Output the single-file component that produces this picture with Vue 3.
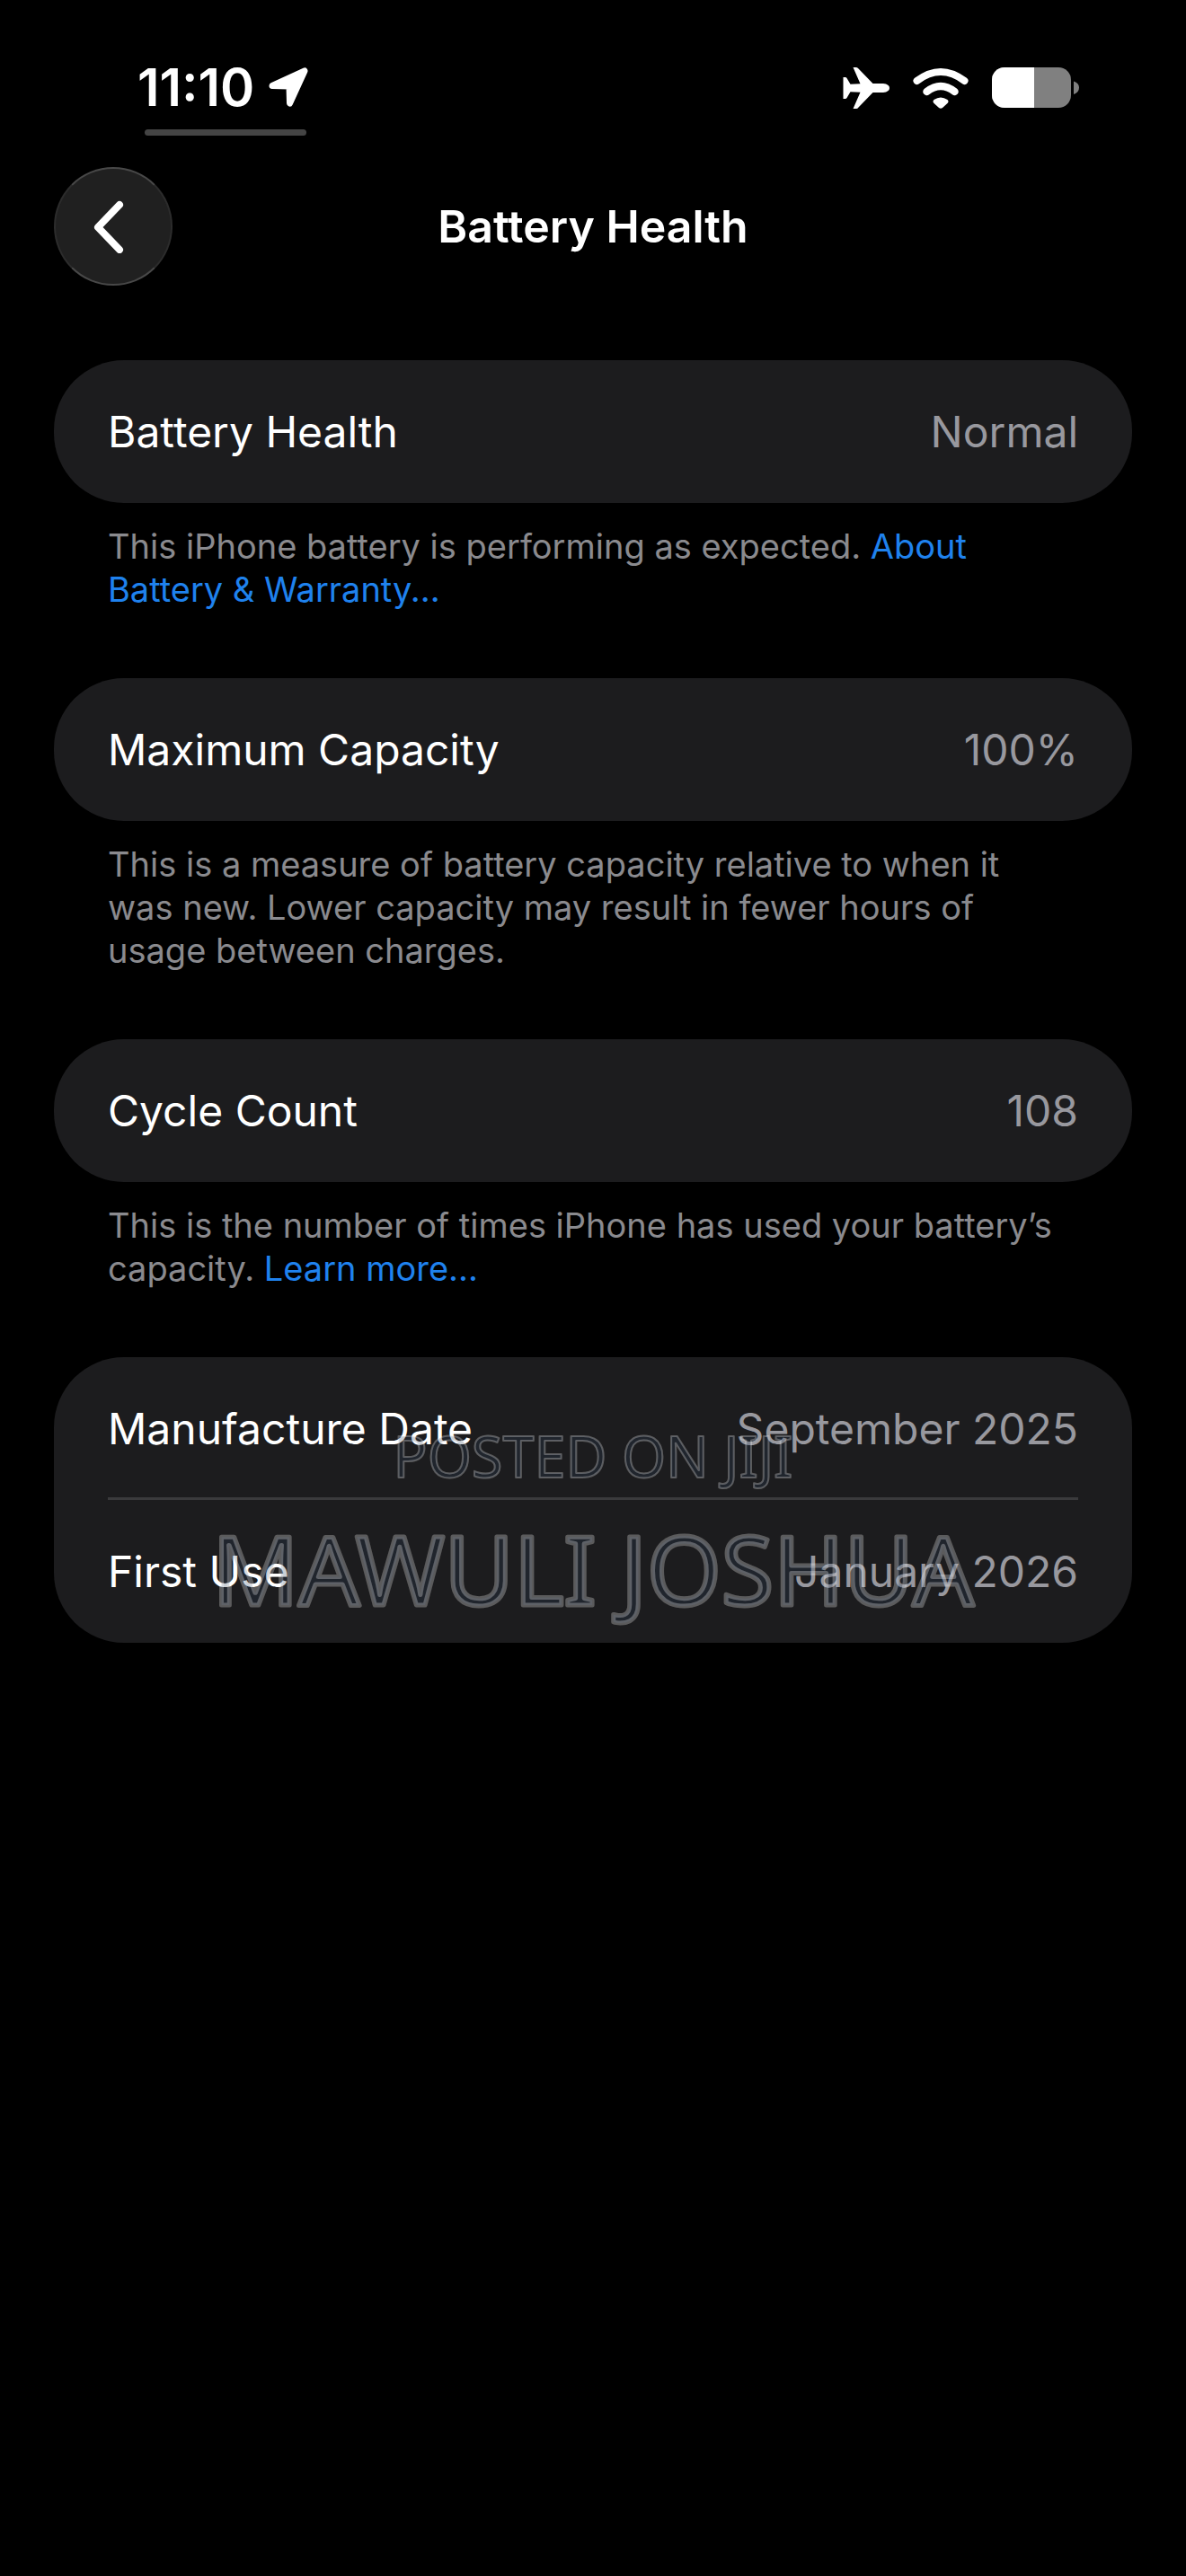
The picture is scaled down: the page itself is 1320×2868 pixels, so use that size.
<script setup>
const groups = [
  {
    rows: [{ label: 'Battery Health', value: 'Normal' }],
    note: 'This iPhone battery is performing as expected.',
    link: 'About Battery & Warranty...',
  },
  {
    rows: [{ label: 'Maximum Capacity', value: '100%' }],
    note: 'This is a measure of battery capacity relative to when it was new. Lower capacity may result in fewer hours of usage between charges.',
  },
  {
    rows: [{ label: 'Cycle Count', value: '108' }],
    note: 'This is the number of times iPhone has used your battery’s capacity.',
    link: 'Learn more...',
  },
  {
    rows: [
      { label: 'Manufacture Date', value: 'September 2025' },
      { label: 'First Use', value: 'January 2026' },
    ],
    watermark: true,
  },
]
</script>

<template>
  <div class="screen">
    <div class="status">
      <div class="status-left">
        <div class="clock">
          <span>11:10</span>
          <svg width="44" height="44" viewBox="0 0 44 44" aria-hidden="true">
            <path d="M4 20.500 L40 4 L23.500 40 L23 21 Z" fill="#fff" stroke="#fff" stroke-width="7" stroke-linejoin="round" />
          </svg>
        </div>
        <div class="pill"></div>
      </div>
      <div class="status-icons">
        <svg width="52" height="46" viewBox="0 0 52 46" aria-hidden="true">
          <path d="M11.500 0 H15 Q16.500 0 17.500 1.500 L33.500 18 H45 Q52 18.800 52 23 Q52 27.200 45 28 H33.500 L17.500 44.500 Q16.500 46 15 46 H11.500 L19.500 27.800 L8.500 27.200 L4.500 34 Q4 35 2.800 35 H0.500 V11 H2.800 Q4 11 4.500 12 L8.500 18.800 L19.500 18.200 Z" fill="#fff" />
        </svg>
        <svg width="62" height="46" viewBox="0 0 62 46" aria-hidden="true">
          <path d="M4.500 15 Q31 -5 57.500 15" fill="none" stroke="#fff" stroke-width="8" stroke-linecap="round" />
          <path d="M15.500 27 Q31 15 46.500 27" fill="none" stroke="#fff" stroke-width="8.500" stroke-linecap="round" />
          <path d="M23.500 36 Q31 31 38.500 36 Q40.500 38 38.500 40 L33 45 Q31 46.500 29 45 L23.500 40 Q21.500 38 23.500 36 Z" fill="#fff" />
        </svg>
        <svg width="97" height="46" viewBox="0 0 97 46" aria-hidden="true">
          <rect x="0" y="0" width="88" height="45" rx="14" fill="#808080" />
          <path d="M14 0 H47 V45 H14 A14 14 0 0 1 0 31 V14 A14 14 0 0 1 14 0 Z" fill="#fff" />
          <path d="M91 15.500 Q97 17.500 97 22.500 Q97 28 91 30 Z" fill="#808080" />
        </svg>
      </div>
    </div>

    <header class="nav">
      <button class="back" type="button" aria-label="Back">
        <svg width="38" height="60" viewBox="0 0 38 60" aria-hidden="true">
          <path d="M30 6 L6 31 L30 56" fill="none" stroke="#fff" stroke-width="8" stroke-linecap="round" stroke-linejoin="round" />
        </svg>
      </button>
      <h1>Battery Health</h1>
    </header>

    <main>
      <section v-for="(group, i) in groups" :key="i">
        <div class="card">
          <dl v-for="row in group.rows" :key="row.label" class="row">
            <dt>{{ row.label }}</dt>
            <dd>{{ row.value }}</dd>
          </dl>
          <svg v-if="group.watermark" class="watermark" width="100%" height="100%">
            <text class="small" x="50%" y="134">POSTED ON JIJI</text>
            <text class="large" x="50%" y="276">MAWULI JOSHUA</text>
          </svg>
        </div>
        <p v-if="group.note" class="note">
          {{ group.note }}
          <a v-if="group.link" href="#">{{ group.link }}</a>
        </p>
      </section>
    </main>
  </div>
</template>

<style>
html,
body {
  background: #000;
}
</style>

<style scoped>
.screen {
  min-height: 100vh;
  background: #000;
  color: #fff;
  font-family: Inter, "Liberation Sans", sans-serif;
}

svg {
  display: block;
}

.status {
  display: flex;
  justify-content: space-between;
  align-items: flex-start;
  padding: 75px 119px 0 153px;
}

.clock {
  display: flex;
  align-items: center;
  gap: 16px;
  font-size: 58px;
  font-weight: 600;
  line-height: 44px;
}

.pill {
  width: 180px;
  height: 7px;
  margin: 25px 0 0 8px;
  border-radius: 4px;
  background: #444;
}

.status-icons {
  display: flex;
  gap: 26px;
}

.nav {
  display: grid;
  grid-template-columns: 132px 1fr 132px;
  align-items: center;
  padding: 35px 60px 83px;
}

.back {
  display: flex;
  align-items: center;
  justify-content: center;
  width: 132px;
  height: 132px;
  padding: 0 8px 0 0;
  border: 2px solid #2c2c2c;
  border-top-color: #484848;
  border-bottom-color: #484848;
  border-radius: 50%;
  background: #202020;
}

h1 {
  margin: 0;
  font-size: 50px;
  font-weight: 600;
  line-height: 62px;
  text-align: center;
}

main {
  padding: 0 60px;
}

.card {
  position: relative;
  border-radius: 78px;
  background: #1c1c1e;
}

.row {
  display: flex;
  align-items: center;
  justify-content: space-between;
  height: 159px;
  margin: 0 60px;
  font-size: 48px;
  line-height: 60px;
}

.row + .row {
  box-shadow: 0 -3px #3a3a3c;
}

dd {
  margin: 0;
  color: #98989e;
}

.note {
  margin: 0;
  padding: 24px 80px 75px 60px;
  color: #8a8a8e;
  font-size: 38px;
  line-height: 48px;
}

a {
  color: #1f82ee;
  text-decoration: none;
}

.watermark {
  position: absolute;
  inset: 0;
  pointer-events: none;
}

.watermark text {
  fill: rgba(44, 62, 90, 0.25);
  stroke: rgba(255, 255, 255, 0.28);
  stroke-linejoin: round;
  text-anchor: middle;
  font-family: "Noto Sans", sans-serif;
}

.watermark .small {
  font-size: 63px;
  stroke-width: 2px;
}

.watermark .large {
  font-size: 106px;
  stroke-width: 5px;
}
</style>
